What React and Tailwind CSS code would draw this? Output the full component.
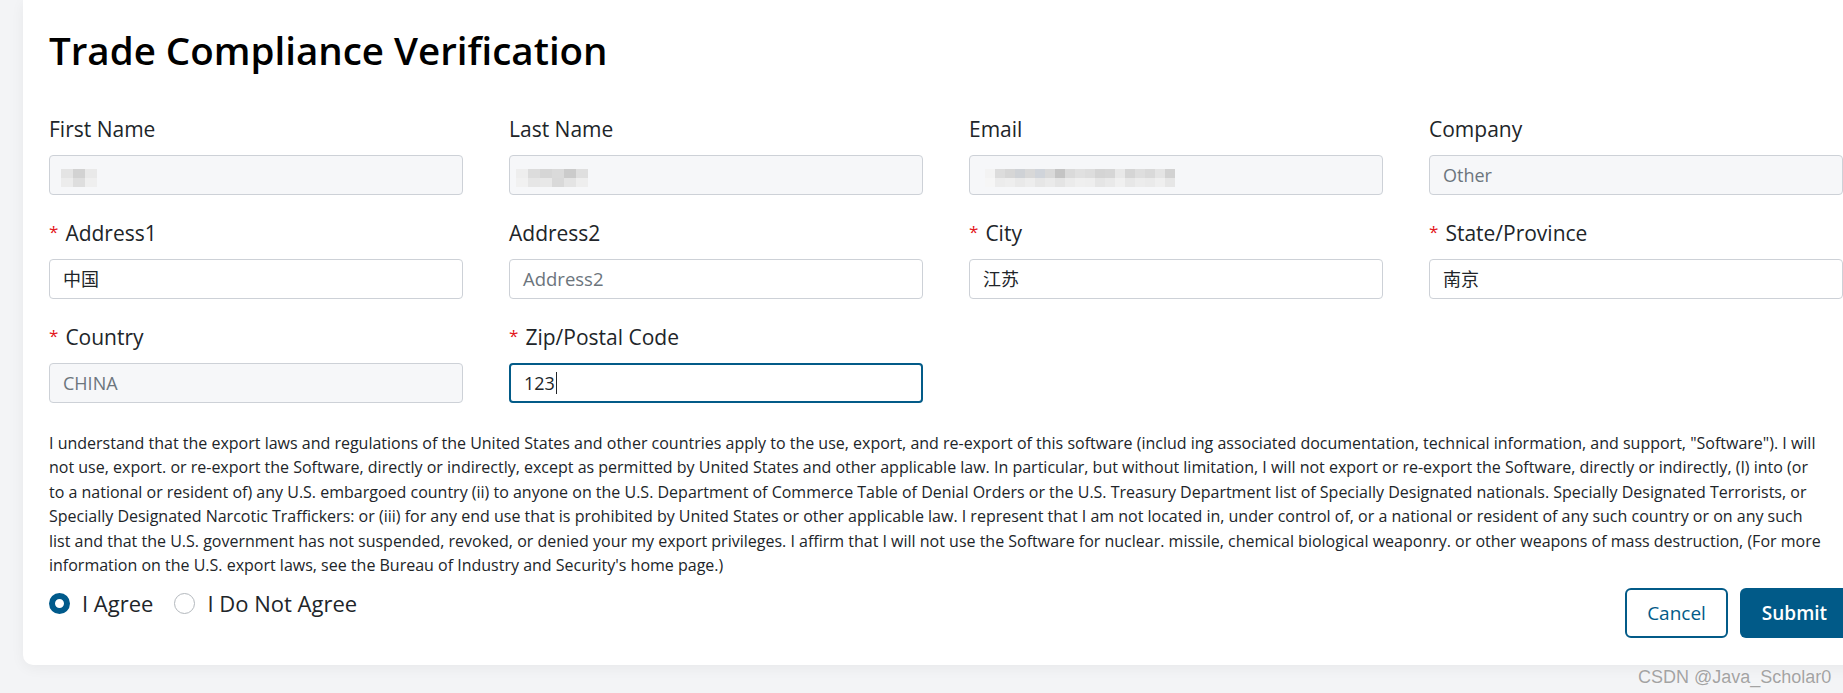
import React from "react";

const paragraph = [
  'I understand that the export laws and regulations of the United States and other countries apply to the use, export, and re-export of this software (includ ing associated documentation, technical information, and support, "Software"). I will',
  "not use, export. or re-export the Software, directly or indirectly, except as permitted by United States and other applicable law. In particular, but without limitation, I will not export or re-export the Software, directly or indirectly, (I) into (or",
  "to a national or resident of) any U.S. embargoed country (ii) to anyone on the U.S. Department of Commerce Table of Denial Orders or the U.S. Treasury Department list of Specially Designated nationals. Specially Designated Terrorists, or",
  "Specially Designated Narcotic Traffickers: or (iii) for any end use that is prohibited by United States or other applicable law. I represent that I am not located in, under control of, or a national or resident of any such country or on any such",
  "list and that the U.S. government has not suspended, revoked, or denied your my export privileges. I affirm that I will not use the Software for nuclear. missile, chemical biological weaponry. or other weapons of mass destruction, (For more",
  "information on the U.S. export laws, see the Bureau of Industry and Security's home page.)",
];

const mosaics = {
  first: {
    left: 11,
    rows: [["#e4e4e4", "#d2d2d2", "#e9e9e9"], ["#ececec", "#dedede", "#efefef"]],
    w: 12,
  },
  last: {
    left: 6,
    rows: [
      ["#eeeeee", "#dcdcdc", "#d6d6d6", "#dadada", "#cbcbcb", "#dfdfdf"],
      ["#f1f1f1", "#e6e6e6", "#e8e8e8", "#d9d9d9", "#e4e4e4", "#eeeeee"],
    ],
    w: 12,
  },
  email: {
    left: 15,
    rows: [
      ["#f3f3f3", "#dcdcdc", "#d6d6d6", "#cfd2d6", "#d8d8d8", "#d0d4da", "#d9d9d9", "#c4c4c4", "#dadada", "#e0e0e0", "#dddddd", "#d4d4d4", "#d6d6d6", "#e8e8e8", "#d5d5d5", "#dedede", "#d9d9d9", "#e4e4e4", "#d2d2d2"],
      ["#f6f6f6", "#ececec", "#eeeeee", "#e9e9e9", "#ededed", "#e6e6e6", "#eaeaea", "#e4e4e4", "#ebebeb", "#efefef", "#eeeeee", "#e5e5e5", "#e9e9e9", "#f0f0f0", "#e7e7e7", "#ececec", "#eaeaea", "#efefef", "#e6e6e6"],
    ],
    w: 10,
  },
};

function Mosaic({ data }) {
  return (
    <div className="absolute top-[13px] flex flex-col" style={{ left: data.left }}>
      {data.rows.map((row, i) => (
        <div key={i} className="flex h-[9px]">
          {row.map((c, j) => (
            <div key={j} className="h-full" style={{ width: data.w, backgroundColor: c }} />
          ))}
        </div>
      ))}
    </div>
  );
}

function Label({ children, required }) {
  return (
    <div className="h-[28px] whitespace-nowrap text-[21px] leading-[28px] text-[#212529]">
      {required && <span className="relative top-[-3px] mr-[7px] text-[17px] text-[#e3151b]">*</span>}
      {children}
    </div>
  );
}

function Box({ variant = "normal", children }) {
  const base = "relative mt-[12px] flex h-[40px] items-center rounded-[4px] px-[13px] text-[18px] whitespace-nowrap";
  if (variant === "disabled")
    return <div className={`${base} border-[1.5px] border-[#cdd1d7] bg-[#f6f7f9] text-[#6c757d]`}>{children}</div>;
  if (variant === "focus")
    return <div className={`${base} border-2 border-[#035b88] bg-white text-[#212529]`}>{children}</div>;
  return <div className={`${base} border-[1.5px] border-[#cdd1d7] bg-white text-[#212529]`}>{children}</div>;
}

export default function App() {
  return (
    <div className="relative h-[693px] w-[1843px] overflow-hidden bg-[#f3f4f6] font-['Open_Sans','Noto_Sans_CJK_SC',sans-serif]">
      <div className="ml-[23px] w-[1852px] rounded-b-[10px] bg-white pl-[26px] pr-[26px] pt-[27px] pb-[27px] shadow-[0_3px_14px_rgba(0,0,0,0.05)]">
        <h1 className="h-[46px] whitespace-nowrap text-[38.5px] leading-[46px] font-semibold text-black">
          Trade Compliance Verification
        </h1>

        <div className="mt-[42px] grid grid-cols-[repeat(4,414px)] gap-x-[46px] gap-y-[24px]">
          <div>
            <Label>First Name</Label>
            <Box variant="disabled">
              <Mosaic data={mosaics.first} />
            </Box>
          </div>
          <div>
            <Label>Last Name</Label>
            <Box variant="disabled">
              <Mosaic data={mosaics.last} />
            </Box>
          </div>
          <div>
            <Label>Email</Label>
            <Box variant="disabled">
              <Mosaic data={mosaics.email} />
            </Box>
          </div>
          <div>
            <Label>Company</Label>
            <Box variant="disabled">Other</Box>
          </div>

          <div>
            <Label required>Address1</Label>
            <Box>中国</Box>
          </div>
          <div>
            <Label>Address2</Label>
            <Box>
              <span className="text-[18.5px] text-[#6c757d]">Address2</span>
            </Box>
          </div>
          <div>
            <Label required>City</Label>
            <Box>江苏</Box>
          </div>
          <div>
            <Label required>State/Province</Label>
            <Box>南京</Box>
          </div>

          <div>
            <Label required>Country</Label>
            <Box variant="disabled">CHINA</Box>
          </div>
          <div>
            <Label required>Zip/Postal Code</Label>
            <Box variant="focus">
              <span>123</span>
              <span className="ml-[1px] inline-block h-[22px] w-[1px] bg-[#212529]" />
            </Box>
          </div>
        </div>

        <div className="mt-[28px] text-[16px] leading-[24.4px] text-[#212529]">
          {paragraph.map((l, i) => (
            <div key={i} className="whitespace-nowrap">
              {l}
            </div>
          ))}
        </div>

        <div className="mt-[11px] flex items-start justify-between">
          <div className="flex h-[30px] items-center text-[22px] text-[#212529]">
            <span className="box-border h-[21px] w-[21px] rounded-full border-[6px] border-[#005a8b] bg-white" />
            <span className="ml-[12px]">I Agree</span>
            <span className="ml-[21px] box-border h-[21px] w-[21px] rounded-full border border-[#b3b8bd] bg-white" />
            <span className="ml-[12px]">I Do Not Agree</span>
          </div>
          <div className="flex gap-[12px]">
            <button className="h-[50px] w-[103px] rounded-[6px] border-2 border-[#035b88] bg-white text-[19px] text-[#035b88]">
              Cancel
            </button>
            <button className="h-[50px] w-[109px] rounded-[6px] bg-[#015a88] text-[19px] font-semibold text-white">
              Submit
            </button>
          </div>
        </div>
      </div>

      <div className="absolute left-[1638px] top-[664px] font-['Liberation_Sans',sans-serif] text-[18px] text-[#a3a3a3] [text-shadow:0_0_1px_#fff]">
        CSDN @Java_Scholar0
      </div>
    </div>
  );
}
